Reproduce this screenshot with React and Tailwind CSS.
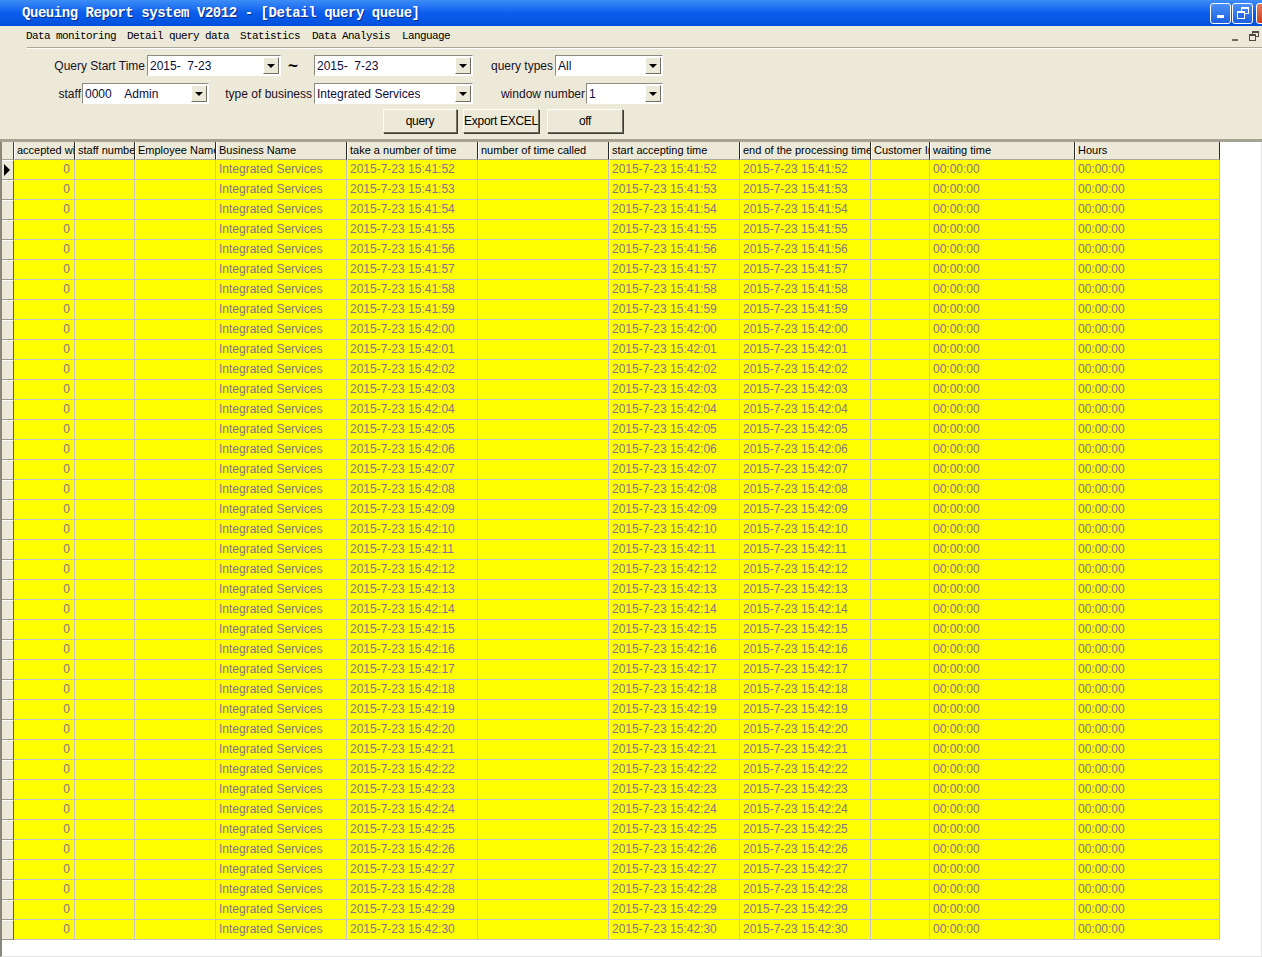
import React from "react";

const COLS = [
  { title: "accepted window number", w: 61 },
  { title: "staff number", w: 60 },
  { title: "Employee Name", w: 81 },
  { title: "Business Name", w: 131 },
  { title: "take a number of time", w: 131 },
  { title: "number of time called", w: 131 },
  { title: "start accepting time", w: 131 },
  { title: "end of the processing time", w: 131 },
  { title: "Customer Information", w: 59 },
  { title: "waiting time", w: 145 },
  { title: "Hours", w: 145 },
];

const pad = (n) => String(n).padStart(2, "0");

const rows = Array.from({ length: 39 }, (_, i) => {
  const total = 41 * 60 + 52 + i;
  const t = `2015-7-23 15:${pad(Math.floor(total / 60))}:${pad(total % 60)}`;
  return ["0", "", "", "Integrated Services", t, "", t, t, "", "00:00:00", "00:00:00"];
});

const Combo = ({ w, value }) => (
  <div
    className="h-[21px] bg-white border border-t-[#8c8a7e] border-l-[#8c8a7e] border-r-white border-b-white flex items-center justify-between shrink-0"
    style={{ width: w }}
  >
    <span className="pl-[2px] text-[12px] text-[#0c0c3a] whitespace-pre overflow-hidden">{value}</span>
    <div className="w-[16px] h-[17px] mr-[1px] bg-[#ece9d8] border border-t-white border-l-white border-r-[#716f64] border-b-[#716f64] flex items-center justify-center shrink-0">
      <div className="w-0 h-0 border-x-[4px] border-x-transparent border-t-[4px] border-t-black" />
    </div>
  </div>
);

const Label = ({ w, children, pr = 2 }) => (
  <div className="shrink-0 text-right text-[12px] text-[#1a1024] whitespace-nowrap" style={{ width: w, paddingRight: pr }}>
    {children}
  </div>
);

const Btn = ({ w, children }) => (
  <button
    className="h-[24px] px-0 bg-[#ece9d8] border border-t-white border-l-white border-r-[#716f64] border-b-[#716f64] shadow-[1px_1px_0_#3c3b34] text-[12px] tracking-[-0.3px] text-black whitespace-nowrap overflow-hidden shrink-0"
    style={{ width: w }}
  >
    {children}
  </button>
);

export default function App() {
  return (
    <div className="w-[1262px] h-[957px] overflow-hidden flex flex-col bg-[#ece9d8] font-['Liberation_Sans',Arial,sans-serif]">
      {/* title bar */}
      <div className="h-[26px] shrink-0 flex items-center bg-gradient-to-b from-[#3d8cf7] via-[#0a5ded] to-[#0450dc] overflow-hidden">
        <span className="ml-[22px] text-white font-bold text-[14px] tracking-[-0.45px] font-['Liberation_Mono',monospace] [text-shadow:1px_1px_0_#0a2c8a] whitespace-nowrap">
          Queuing Report system V2012 - [Detail query queue]
        </span>
        <div className="ml-auto mr-[-15px] flex items-center gap-[1px]">
          <div className="w-[21px] h-[21px] rounded-[3px] border border-white bg-gradient-to-b from-[#4a8ff8] to-[#1d5fe0] flex items-end justify-center pb-[5px]">
            <div className="w-[7px] h-[3px] bg-white" />
          </div>
          <div className="w-[21px] h-[21px] rounded-[3px] border border-white bg-gradient-to-b from-[#4a8ff8] to-[#1d5fe0] relative">
            <div className="absolute left-[8px] top-[3px] w-[8px] h-[7px] border border-white border-t-2" />
            <div className="absolute left-[4px] top-[7px] w-[8px] h-[8px] border border-white border-t-2 bg-[#2a6ce8]" />
          </div>
          <div className="ml-[2px] w-[21px] h-[21px] rounded-[3px] border border-white bg-gradient-to-b from-[#e87a5c] to-[#c8401e]" />
        </div>
      </div>

      {/* menu bar */}
      <div className="h-[21px] shrink-0 flex items-center font-['Liberation_Mono',monospace] text-[11px] tracking-[-0.6px] text-black">
        <span className="ml-[26px]">Data monitoring</span>
        <span className="ml-[11px]">Detail query data</span>
        <span className="ml-[11px]">Statistics</span>
        <span className="ml-[12px]">Data Analysis</span>
        <span className="ml-[12px]">Language</span>
        <div className="ml-auto flex items-center gap-[2px]">
          <div className="w-[16px] h-[15px] flex items-end justify-center pb-[3px]">
            <div className="w-[6px] h-[2px] bg-[#6f6d62]" />
          </div>
          <div className="w-[17px] h-[15px] relative">
            <div className="absolute left-[7px] top-[2px] w-[7px] h-[6px] border border-[#4d4b44] border-t-2" />
            <div className="absolute left-[4px] top-[5px] w-[7px] h-[7px] border border-[#4d4b44] border-t-2 bg-[#ece9d8]" />
          </div>
        </div>
      </div>
      <div className="ml-[27px] h-[2px] shrink-0 border-t border-t-[#aca899] border-b border-b-white" />

      {/* query form */}
      <div className="shrink-0 pt-[6px] pb-[6px] flex flex-col">
        <div className="flex items-center h-[21px]">
          <Label w={147}>Query Start Time</Label>
          <Combo w={134} value="2015-  7-23" />
          <div className="w-[33px] shrink-0 pl-[7px] text-[17px] font-bold leading-none">~</div>
          <Combo w={159} value="2015-  7-23" />
          <Label w={82}>query types</Label>
          <Combo w={108} value="All" />
        </div>
        <div className="flex items-center h-[21px] mt-[7px]">
          <Label w={82} pr={1}>staff</Label>
          <Combo w={127} value="0000    Admin" />
          <Label w={105}>type of business</Label>
          <Combo w={159} value="Integrated Services" />
          <Label w={113} pr={1}>window number</Label>
          <Combo w={77} value="1" />
        </div>
        <div className="flex items-center mt-[5px] pl-[383px]">
          <Btn w={74}>query</Btn>
          <div className="w-[6px]" />
          <Btn w={76}>Export EXCEL</Btn>
          <div className="w-[8px]" />
          <Btn w={76}>off</Btn>
        </div>
      </div>
      <div className="h-[3px] shrink-0 bg-[#a6a394]" />

      {/* grid */}
      <div className="flex-1 bg-white border-l-2 border-l-[#8a887c] border-r border-r-[#e4e4e4] border-b border-b-[#e4e4e4] overflow-hidden">
        <div className="flex h-[18px]">
          <div className="w-[12px] shrink-0 bg-[#ece9d8] border-r border-r-[#3c3b34] border-b border-b-[#aca899]" />
          {COLS.map((c) => (
            <div
              key={c.title}
              className="shrink-0 bg-[#ece9d8] border-l border-l-white border-r border-r-[#2a2a2a] border-b border-b-[#aca899] pl-[2px] text-[11px] leading-[17px] text-black whitespace-nowrap overflow-hidden"
              style={{ width: c.w }}
            >
              {c.title}
            </div>
          ))}
        </div>
        {rows.map((r, i) => (
          <div key={i} className="flex h-[20px]">
            <div className="w-[12px] shrink-0 bg-[#ece9d8] border-t border-t-white border-r border-r-[#5a5850] border-b border-b-[#9c9a8e] flex items-center">
              {i === 0 && (
                <div className="ml-[2px] w-0 h-0 border-y-[6px] border-y-transparent border-l-[6px] border-l-black" />
              )}
            </div>
            {r.map((v, j) => (
              <div
                key={j}
                className={`shrink-0 bg-[#ffff00] border-r border-b border-[#c4c0cc] text-[12px] leading-[19px] text-[#86728a] whitespace-nowrap overflow-hidden ${j === 0 ? "text-right pr-[4px]" : "pl-[3px]"}`}
                style={{ width: COLS[j].w }}
              >
                {v}
              </div>
            ))}
          </div>
        ))}
      </div>
    </div>
  );
}
